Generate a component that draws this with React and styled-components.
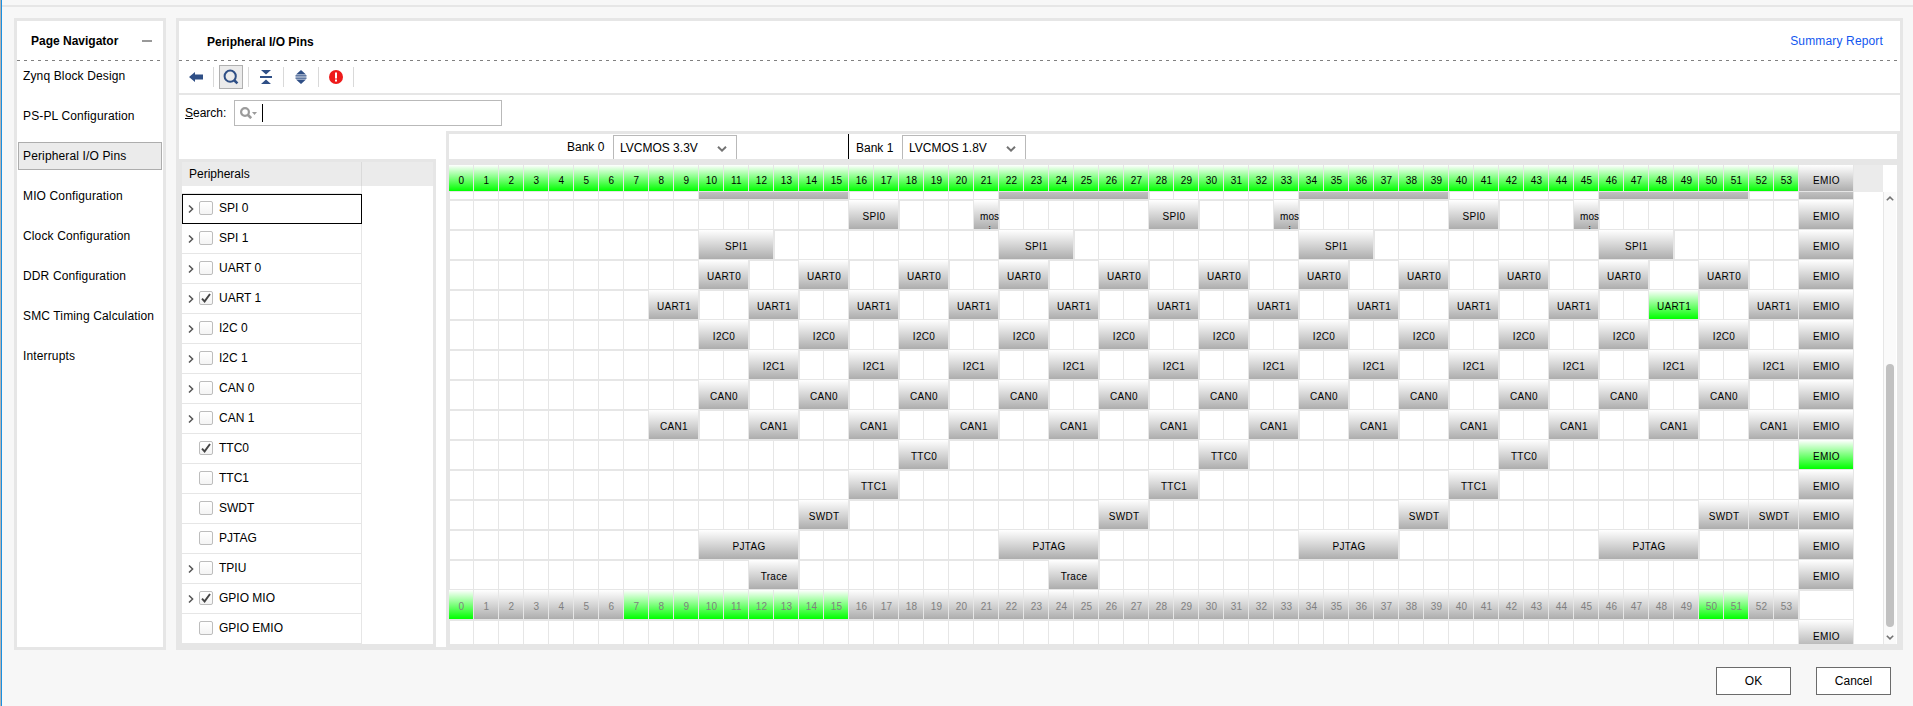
import React from "react";
import styled, { createGlobalStyle, css } from "styled-components";

const LINE = "#e6e6e6";

const Global = createGlobalStyle`
  * { box-sizing: border-box; }
  html, body { margin: 0; height: 706px; overflow: hidden; }
  body {
    font: 12px/14px "Liberation Sans", Arial, sans-serif;
    color: #000;
    background: #f7f7f7;
  }
`;

const Dialog = styled.div`
  height: 706px;
  border-left: 1px solid #b8b2b0;
  display: flex;
`;

const Surface = styled.div`
  flex: 1;
  border-left: 1px solid #1a90e0;
  padding-top: 5px;
  display: flex;
  flex-direction: column;
`;

const Rule = styled.div`
  height: 2px;
  background: ${LINE};
`;

const Columns = styled.div`
  display: flex;
  gap: 10px;
  height: 632px;
  margin: 11px 10px 0 12px;
`;

const Panel = styled.section`
  border: 3px solid ${LINE};
  background: #fff;
  display: flex;
  flex-direction: column;
  ${(p) => (p.$width ? css`width: ${p.$width}px; flex: none;` : css`flex: 1; min-width: 0;`)}
`;

const PanelHead = styled.header`
  display: flex;
  align-items: center;
  justify-content: space-between;
  height: 39px;
  padding: ${(p) => p.$pad};
  flex: none;
`;

const Title = styled.h2`
  margin: 0;
  font-size: 12px;
  line-height: 14px;
  font-weight: bold;
  white-space: nowrap;
  padding-top: ${(p) => p.$drop || 0}px;
`;

const Minimize = styled.span`
  width: 10px;
  height: 2px;
  background: #999;
`;

const Dashes = styled.div`
  height: 1px;
  flex: none;
  margin-right: ${(p) => p.$right}px;
  background: repeating-linear-gradient(to right, #808080 0 3px, transparent 3px 7px);
`;

const NavList = styled.nav`
  display: flex;
  flex-direction: column;
  gap: 12px;
  padding: 1px 1px 0;
`;

const NavItem = styled.a`
  height: 28px;
  padding-left: 4px;
  line-height: 26px;
  letter-spacing: 0.14px;
  white-space: nowrap;
  border: 1px solid ${(p) => (p.$active ? "#adadad" : "transparent")};
  background: ${(p) => (p.$active ? "#ebebeb" : "none")};
`;

const Link = styled.a`
  color: #1257f0;
  font-size: 12px;
  letter-spacing: 0.15px;
`;

const Toolbar = styled.div`
  height: 34px;
  flex: none;
  display: flex;
  align-items: flex-start;
  padding: 4px 0 0 5px;
  border-bottom: 2px solid ${LINE};
`;

const Tool = styled.button`
  width: 24px;
  height: 24px;
  padding: 0;
  display: flex;
  align-items: center;
  justify-content: center;
  border: 1px solid ${(p) => (p.$on ? "#b0b0b0" : "transparent")};
  background: ${(p) => (p.$on ? "#ebebeb" : "none")};
`;

const ToolGap = styled.span`
  width: 1px;
  height: 20px;
  margin: 2px 5px 0;
  background: #d9d9d9;
`;

const SearchRow = styled.label`
  display: flex;
  align-items: center;
  height: 36px;
  flex: none;
  padding-left: 6px;
`;

const SearchText = styled.span`
  width: 49px;
`;

const SearchField = styled.span`
  width: 268px;
  height: 26px;
  border: 1px solid #b9b9b9;
  display: flex;
  align-items: center;
  padding-left: 5px;
`;

const Caret = styled.i`
  width: 1px;
  height: 18px;
  margin-left: 5px;
  background: #000;
`;

const Workspace = styled.div`
  flex: 1;
  min-height: 0;
  display: flex;
  margin: 0 -3px -3px;
`;

const TreePane = styled.div`
  width: 260px;
  height: 491px;
  margin-top: 28px;
  border: solid ${LINE};
  border-width: 3px 3px 6px 6px;
  display: flex;
  flex-direction: column;
`;

const TreeHead = styled.div`
  height: 24px;
  flex: none;
  background: #ebebeb;
`;

const TreeName = styled.div`
  width: 180px;
  height: 24px;
  padding: 5px 0 0 7px;
  border-right: 1px solid #dadada;
`;

const TreeBody = styled.div`
  width: 180px;
  height: 458px;
  border-right: 1px solid ${LINE};
  padding-top: 7px;
`;

const TreeRow = styled.div`
  height: 30px;
  display: flex;
  align-items: center;
  padding: 0 0 2px 6px;
  border-bottom: 1px solid ${LINE};
  ${(p) =>
    p.$selected &&
    css`
      margin-right: -1px;
      padding: 0 0 3px 5px;
      border: 1px solid #000;
    `}
`;

const TreeTop = styled.div`
  height: 1px;
  background: ${LINE};
`;

const Expander = styled.svg`
  width: 6px;
  height: 8px;
  margin: 2px 5px 0 0;
  visibility: ${(p) => (p.$show ? "visible" : "hidden")};
`;

const Check = styled.span`
  width: 14px;
  height: 14px;
  margin: 1px 6px 0 0;
  border: 1px solid #bdbdbd;
  border-radius: 2px;
  background: linear-gradient(#fff, #f4f4f4);
  display: flex;
`;

const Gap = styled.div`
  width: 10px;
  height: 516px;
  flex: none;
`;

const PinPane = styled.div`
  flex: 1;
  min-width: 0;
  height: 519px;
  border: solid ${LINE};
  border-width: 3px 6px 6px 3px;
`;

const BankBar = styled.div`
  display: flex;
  height: 25px;
  overflow: hidden;
`;

const Bank = styled.div`
  display: flex;
  align-items: flex-start;
  ${(p) =>
    p.$first
      ? css`width: 399px; padding-left: 118px; --text-top: 6px;`
      : css`border-left: 1px solid #000; padding-left: 7px; --text-top: 7px;`}
`;

const BankLabel = styled.span`
  width: 46px;
  padding-top: var(--text-top);
`;

const Select = styled.span`
  width: 124px;
  height: 28px;
  margin-top: 1px;
  padding: 0 9px 0 6px;
  border: 1px solid #b9b9b9;
  display: flex;
  justify-content: space-between;
  line-height: 24px;
`;

const HeadBand = styled.div`
  display: flex;
  height: 33px;
  border-top: 6px solid ${LINE};
  background: #fff;
`;

const HeadFill = styled.div`
  width: 1434px;
  height: 27px;
  background: #ebebeb;
`;

const PinRow = styled.div`
  display: grid;
  grid-template-columns: repeat(54, 24px) 54px;
  grid-template-rows: 100%;
  column-gap: 1px;
  width: 1405px;
  height: ${(p) => p.$height || 30}px;
  padding: 0 1px 1px 0;
  background: ${LINE};
`;

const fills = {
  green: "linear-gradient(#fff 0%, #00ff00 100%)",
  gray: "linear-gradient(#fff 0%, #adadad 100%)",
};

const Block = styled.div`
  grid-column: span ${(p) => p.$span || 1};
  min-width: 0;
  min-height: 0;
  background: ${(p) => fills[p.$tone]};
  color: ${(p) => (p.$dim ? "#808080" : "#000")};
  font-size: 10px;
  line-height: 12px;
  letter-spacing: 0.3px;
  text-align: center;
  padding: ${(p) => p.$top || 11}px 0 0 1px;
  clip-path: inset(0 -1px 0 0);
`;

const Wrapped = styled.span`
  display: block;
  width: 19px;
  margin: -1px 0 0 5px;
  line-height: 14px;
  letter-spacing: 0;
  white-space: pre;
`;

const Blank = styled.div`
  background: #fff;
  margin-top: 1px;
  margin-left: ${(p) => (p.$inset ? 1 : 0)}px;
`;

const PinBody = styled.div`
  display: flex;
  height: 452px;
  overflow: hidden;
`;

const PinRows = styled.div`
  width: 1434px;
  margin-top: -22px;
`;

const ScrollBar = styled.div`
  width: 13px;
  border-left: 1px solid ${LINE};
  background: #fafafa;
  display: flex;
  flex-direction: column;
  align-items: center;
`;

const Thumb = styled.div`
  width: 8px;
  height: 263px;
  margin-top: 159px;
  margin-bottom: 8px;
  border-radius: 4px;
  background: #c1c1c1;
`;

const Actions = styled.footer`
  display: flex;
  justify-content: flex-end;
  gap: 25px;
  padding: 17px 22px 0 0;
`;

const ActionButton = styled.button`
  width: 75px;
  height: 28px;
  padding: 0;
  border: 1px solid #6b6b6b;
  background: #fff;
  color: #000;
  font: 12px "Liberation Sans", Arial, sans-serif;
`;

const pages = [
  "Zynq Block Design",
  "PS-PL Configuration",
  "Peripheral I/O Pins",
  "MIO Configuration",
  "Clock Configuration",
  "DDR Configuration",
  "SMC Timing Calculation",
  "Interrupts",
];

const peripherals = [
  ["SPI 0", true, false],
  ["SPI 1", true, false],
  ["UART 0", true, false],
  ["UART 1", true, true],
  ["I2C 0", true, false],
  ["I2C 1", true, false],
  ["CAN 0", true, false],
  ["CAN 1", true, false],
  ["TTC0", false, true],
  ["TTC1", false, false],
  ["SWDT", false, false],
  ["PJTAG", false, false],
  ["TPIU", true, false],
  ["GPIO MIO", true, true],
  ["GPIO EMIO", false, false],
];

const range = (from, to, step) => {
  const out = [];
  for (let i = from; i <= to; i += step) out.push(i);
  return out;
};

const make = (label, span, starts, active) =>
  starts.map((start) => ({ label, span, start, tone: start === active ? "green" : "gray" }));

const spi0 = [
  ...make("SPI0", 2, [16, 28, 40]),
  ...make("mosi", 1, [21, 33, 45]),
].sort((a, b) => a.start - b.start);

const gpioOn = new Set([0, 7, 8, 9, 10, 11, 12, 13, 14, 15, 50, 51]);
const gpio = range(0, 53, 1).map((n) => ({
  label: String(n),
  span: 1,
  start: n,
  tone: gpioOn.has(n) ? "green" : "gray",
  dim: true,
}));

const pinRows = [
  { blocks: make("", 6, [10, 22, 34, 46]), emio: "gray", hideLabel: true },
  { blocks: spi0, emio: "gray" },
  { blocks: make("SPI1", 3, [10, 22, 34, 46]), emio: "gray" },
  { blocks: make("UART0", 2, range(10, 50, 4)), emio: "gray" },
  { blocks: make("UART1", 2, range(8, 52, 4), 48), emio: "gray" },
  { blocks: make("I2C0", 2, range(10, 50, 4)), emio: "gray" },
  { blocks: make("I2C1", 2, range(12, 52, 4)), emio: "gray" },
  { blocks: make("CAN0", 2, range(10, 50, 4)), emio: "gray" },
  { blocks: make("CAN1", 2, range(8, 52, 4)), emio: "gray" },
  { blocks: make("TTC0", 2, [18, 30, 42]), emio: "green" },
  { blocks: make("TTC1", 2, [16, 28, 40]), emio: "gray" },
  { blocks: make("SWDT", 2, [14, 26, 38, 50, 52]), emio: "gray" },
  { blocks: make("PJTAG", 4, [10, 22, 34, 46]), emio: "gray" },
  { blocks: make("Trace", 2, [12, 24]), emio: "gray" },
  { blocks: gpio, emio: null },
  { blocks: [], emio: "gray" },
];

function Pins({ blocks, emio, hideLabel }) {
  const cells = [];
  let col = 0;
  let afterBlock = true;
  const fillTo = (end) => {
    while (col < end) {
      cells.push(<Blank key={col} $inset={afterBlock} />);
      afterBlock = false;
      col += 1;
    }
  };
  blocks.forEach((b) => {
    fillTo(b.start);
    cells.push(
      <Block key={col} $span={b.span} $tone={b.tone} $dim={b.dim}>
        {b.label === "mosi" ? <Wrapped>{"mos\ni"}</Wrapped> : b.label}
      </Block>
    );
    col += b.span;
    afterBlock = true;
  });
  fillTo(54);
  return (
    <PinRow>
      {cells}
      {emio ? <Block $tone={emio}>{hideLabel ? "" : "EMIO"}</Block> : <Blank $inset />}
    </PinRow>
  );
}

const ChevronIcon = styled.svg`
  flex: none;
  width: ${(p) => (p.$small ? 8 : 10)}px;
  height: ${(p) => (p.$small ? 5 : 6)}px;
`;

const Chevron = ({ up, small }) => (
  <ChevronIcon $small={small} viewBox="0 0 10 6">
    <path d={up ? "M1 5.2 5 1.4 9 5.2" : "M1 .8 5 4.6 9 .8"} fill="none" stroke="#737373" strokeWidth="2" />
  </ChevronIcon>
);

const ScrollArrow = styled.span`
  height: 13px;
  display: flex;
  align-items: center;
`;

const SelectArrow = styled.span`
  padding-top: 10px;
  display: flex;
`;

const BLUE = "#2f4f86";

const Icons = {
  back: (
    <svg width="14" height="10" viewBox="0 0 14 10">
      <path d="M0 5 6 0v2.5h8v5H6V10z" fill={BLUE} />
    </svg>
  ),
  find: (
    <svg width="16" height="16" viewBox="0 0 16 16">
      <circle cx="7.2" cy="7.2" r="5.6" fill="none" stroke={BLUE} strokeWidth="2" />
      <path d="M11 11l3.4 3.4" stroke={BLUE} strokeWidth="2.6" />
    </svg>
  ),
  collapse: (
    <svg width="12" height="14" viewBox="0 0 12 14">
      <path d="M1 0h10L6 4.6zM0 6h12v2H0zM6 9.4 11 14H1z" fill={BLUE} />
    </svg>
  ),
  expand: (
    <svg width="12" height="14" viewBox="0 0 12 14">
      <path d="M6 0l5 4.4H1zM.5 5.2h11v1.3H.5zM.5 7.5h11v1.3H.5zM1 9.6h10L6 14z" fill={BLUE} />
    </svg>
  ),
  error: (
    <svg width="14" height="14" viewBox="0 0 14 14">
      <circle cx="7" cy="7" r="7" fill="#ee1b1b" />
      <path d="M6 2.6h2v5.8H6zM6 9.4h2v2H6z" fill="#fff" />
    </svg>
  ),
};

export default function App() {
  return (
    <Dialog>
      <Global />
      <Surface>
        <Rule />
        <Columns>
          <Panel $width={152}>
            <PanelHead $pad="0 11px 0 14px">
              <Title>Page Navigator</Title>
              <Minimize />
            </PanelHead>
            <Dashes $right={2} />
            <NavList>
              {pages.map((name) => (
                <NavItem key={name} $active={name === "Peripheral I/O Pins"}>
                  {name}
                </NavItem>
              ))}
            </NavList>
          </Panel>
          <Panel>
            <PanelHead $pad="0 17px 0 28px">
              <Title $drop={2}>Peripheral I/O Pins</Title>
              <Link>Summary Report</Link>
            </PanelHead>
            <Dashes $right={3} />
            <Toolbar>
              {Object.entries(Icons).map(([name, icon]) => (
                <React.Fragment key={name}>
                  <Tool $on={name === "find"}>{icon}</Tool>
                  <ToolGap />
                </React.Fragment>
              ))}
            </Toolbar>
            <SearchRow>
              <SearchText>
                <u>S</u>earch:
              </SearchText>
              <SearchField>
                <svg width="17" height="12" viewBox="0 0 17 12">
                  <circle cx="5" cy="5" r="3.9" fill="none" stroke="#9b9b9b" strokeWidth="2.2" />
                  <path d="M8 8l3.2 3.2" stroke="#9b9b9b" strokeWidth="2.6" />
                  <path d="M12 5h5l-2.5 3z" fill="#9b9b9b" />
                </svg>
                <Caret />
              </SearchField>
            </SearchRow>
            <Workspace>
              <TreePane>
                <TreeHead>
                  <TreeName>Peripherals</TreeName>
                </TreeHead>
                <TreeBody>
                  <TreeTop />
                  {peripherals.map(([name, expandable, checked], i) => (
                    <TreeRow key={name} $selected={i === 0}>
                      <Expander $show={expandable} viewBox="0 0 6 8">
                        <path d="M1 .5 4.6 4 1 7.5" fill="none" stroke="#555" strokeWidth="1.5" />
                      </Expander>
                      <Check>
                        {checked && (
                          <svg width="12" height="12" viewBox="0 0 12 12">
                            <path d="M2 6.6 4.6 9.4 10 2" fill="none" stroke="#444" strokeWidth="1.9" />
                          </svg>
                        )}
                      </Check>
                      {name}
                    </TreeRow>
                  ))}
                </TreeBody>
              </TreePane>
              <Gap />
              <PinPane>
                <BankBar>
                  <Bank $first>
                    <BankLabel>Bank 0</BankLabel>
                    <Select>
                      LVCMOS 3.3V
                      <SelectArrow><Chevron /></SelectArrow>
                    </Select>
                  </Bank>
                  <Bank>
                    <BankLabel>Bank 1</BankLabel>
                    <Select>
                      LVCMOS 1.8V
                      <SelectArrow><Chevron /></SelectArrow>
                    </Select>
                  </Bank>
                </BankBar>
                <HeadBand>
                  <HeadFill>
                    <PinRow $height={27}>
                      {range(0, 53, 1).map((n) => (
                        <Block key={n} $tone="green" $top={10}>
                          {n}
                        </Block>
                      ))}
                      <Block $tone="gray" $top={10}>EMIO</Block>
                    </PinRow>
                  </HeadFill>
                </HeadBand>
                <PinBody>
                  <PinRows>
                    {pinRows.map((row, i) => (
                      <Pins key={i} {...row} />
                    ))}
                  </PinRows>
                  <ScrollBar>
                    <ScrollArrow><Chevron up small /></ScrollArrow>
                    <Thumb />
                    <Chevron small />
                  </ScrollBar>
                </PinBody>
              </PinPane>
            </Workspace>
          </Panel>
        </Columns>
        <Actions>
          <ActionButton>OK</ActionButton>
          <ActionButton>Cancel</ActionButton>
        </Actions>
      </Surface>
    </Dialog>
  );
}
